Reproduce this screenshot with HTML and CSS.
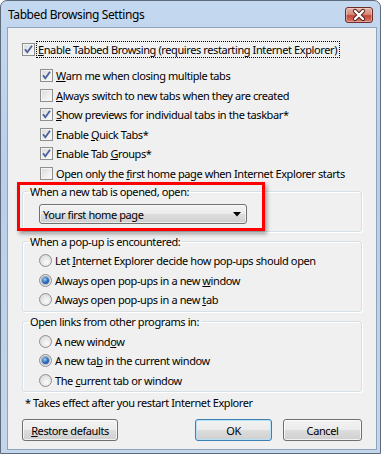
FILE: index.html
```html
<!DOCTYPE html>
<html>
<head>
<meta charset="utf-8">
<link rel="stylesheet" href="styles.css">
</head>
<body>
<div class="window">
  <div class="titlebar">
    <span class="title">Tabbed Browsing Settings</span>
    <div class="close">
      <svg width="28" height="16" viewBox="0 0 28 16">
        <path d="M10 4 L18 12 M18 4 L10 12" stroke="#4a1f1a" stroke-width="4.2" stroke-linecap="round"/>
        <path d="M10 4 L18 12 M18 4 L10 12" stroke="#ffffff" stroke-width="2.4" stroke-linecap="round"/>
      </svg>
    </div>
  </div>
  <div class="content">
    <div class="row main">
      <span class="cb"><svg width="11" height="11" viewBox="0 0 11 11"><path d="M2 5.2 L4.3 8.3 L9 1.8" fill="none" stroke="#4b5f9c" stroke-width="1.8"/></svg></span>
      <span class="focus"><u>E</u>nable Tabbed Browsing (requires restarting Internet Explorer)</span>
    </div>
    <div class="sublist">
      <div class="row"><span class="cb"><svg width="11" height="11" viewBox="0 0 11 11"><path d="M2 5.2 L4.3 8.3 L9 1.8" fill="none" stroke="#4b5f9c" stroke-width="1.8"/></svg></span><span class="lbl"><u>W</u>arn me when closing multiple tabs</span></div>
      <div class="row"><span class="cb"></span><span class="lbl"><u>A</u>lways switch to new tabs when they are created</span></div>
      <div class="row"><span class="cb"><svg width="11" height="11" viewBox="0 0 11 11"><path d="M2 5.2 L4.3 8.3 L9 1.8" fill="none" stroke="#4b5f9c" stroke-width="1.8"/></svg></span><span class="lbl"><u>S</u>how previews for individual tabs in the taskbar*</span></div>
      <div class="row"><span class="cb"><svg width="11" height="11" viewBox="0 0 11 11"><path d="M2 5.2 L4.3 8.3 L9 1.8" fill="none" stroke="#4b5f9c" stroke-width="1.8"/></svg></span><span class="lbl">Enable <u>Q</u>uick Tabs*</span></div>
      <div class="row"><span class="cb"><svg width="11" height="11" viewBox="0 0 11 11"><path d="M2 5.2 L4.3 8.3 L9 1.8" fill="none" stroke="#4b5f9c" stroke-width="1.8"/></svg></span><span class="lbl">Enable Tab <u>G</u>roups*</span></div>
      <div class="row"><span class="cb"></span><span class="lbl">Open only the <u>f</u>irst home page when Internet Explorer starts</span></div>
    </div>
    <fieldset class="group g1">
      <legend>When a new tab is opened, open:</legend>
      <div class="combo"><span>Your first home page</span><svg class="arrow" width="8" height="5" viewBox="0 0 8 5"><path d="M0 0 H8 L4 4.5 Z" fill="#000"/></svg></div>
    </fieldset>
    <fieldset class="group g2">
      <legend>When a pop-up is encountered:</legend>
      <div class="row"><span class="rb"></span><span class="lbl">Let <u>I</u>nternet Explorer decide how pop-ups should open</span></div>
      <div class="row"><span class="rb on"></span><span class="lbl">Always open pop-ups in a new <u>w</u>indow</span></div>
      <div class="row"><span class="rb"></span><span class="lbl">Always open pop-ups in a new <u>t</u>ab</span></div>
    </fieldset>
    <fieldset class="group g3">
      <legend>Open links from other programs in:</legend>
      <div class="row"><span class="rb"></span><span class="lbl">A new wind<u>o</u>w</span></div>
      <div class="row"><span class="rb on"></span><span class="lbl">A new ta<u>b</u> in the current window</span></div>
      <div class="row"><span class="rb"></span><span class="lbl">The <u>c</u>urrent tab or window</span></div>
    </fieldset>
    <p class="note">* Takes effect after you restart Internet Explorer</p>
    <div class="buttons">
      <div class="btn restore"><u>R</u>estore defaults</div>
      <div class="spacer"></div>
      <div class="btn ok">OK</div>
      <div class="btn cancel">Cancel</div>
    </div>
    <div class="highlight"></div>
  </div>
</div>
</body>
</html>
```
FILE: styles.css
```css
html, body {
  margin: 0;
  padding: 0;
  background: #ffffff;
}
body {
  font-family: "Noto Sans", "Open Sans", sans-serif;
  font-size: 11px;
  letter-spacing: -0.4px;
  color: #000;
}
.window {
  width: 381px;
  height: 454px;
  box-sizing: border-box;
  border: 1px solid #5d6b7d;
  border-radius: 7px 7px 0 0;
  background: linear-gradient(to bottom, #c4d8f0 0%, #b9cfe9 40%, #c3d6ec 100%);
  padding: 0 3px 3px 6px;
  display: flex;
  flex-direction: column;
}
.titlebar {
  height: 26px;
  flex: none;
  display: flex;
  align-items: flex-start;
  position: relative;
}
.title {
  font-size: 12px;
  letter-spacing: -0.4px;
  line-height: 16px;
  margin-top: 6px;
  margin-left: 1px;
  color: #000;
}
.close {
  position: absolute;
  right: 4px;
  top: 6px;
  width: 28px;
  height: 16px;
  box-sizing: border-box;
  border: 1px solid #6e2c26;
  border-radius: 3px;
  background: linear-gradient(to bottom, #e8b0a4 0%, #d88a7a 45%, #c2473a 55%, #d8786a 100%);
  box-shadow: inset 0 0 0 1px rgba(255,255,255,0.35);
  display: flex;
}
.close svg {
  margin: -1px;
}
.content {
  flex: 1;
  position: relative;
  background: #f0f0f0;
  border: 1px solid #8fa4be;
  padding: 13px 14px 0 14px;
  display: flex;
  flex-direction: column;
}
.row {
  display: flex;
  align-items: center;
  height: 19.5px;
  white-space: nowrap;
}
.row.main {
  height: 17px;
}
.cb {
  width: 13px;
  height: 13px;
  box-sizing: border-box;
  flex: none;
  border: 1px solid #8e8f8f;
  background: linear-gradient(135deg, #d9d9d9 0%, #ededed 55%, #fbfbfb 100%);
  box-shadow: inset 0 0 0 1px #f4f4f4;
  display: flex;
  align-items: center;
  justify-content: center;
}
.cb svg {
  display: block;
}
.focus {
  margin-left: 1px;
  padding: 0 2px 0 1px;
  border: 1px dotted #000;
  line-height: 15px;
}
.lbl {
  margin-left: 3px;
  line-height: 15px;
}
.sublist {
  margin-top: 8px;
  padding-left: 18px;
  display: flex;
  flex-direction: column;
}
.group {
  margin: 0;
  min-width: 0;
  border: 1px solid #d5dfe5;
  border-radius: 3px;
  box-shadow: inset 1px 1px 0 #ffffff, 1px 1px 0 #ffffff;
  padding: 0;
}
.group legend {
  padding: 0 2px;
  margin-left: 5px;
  line-height: 15px;
}
.group .row,
.group .combo {
  margin-left: 16px;
}
.g1 {
  margin-top: 1px;
  padding-bottom: 7px;
}
.g2 {
  margin-top: 2px;
  padding-top: 2px;
  padding-bottom: 1.5px;
}
.g3 {
  margin-top: 1.5px;
  padding-top: 2.75px;
  padding-bottom: 1.25px;
}
.rb {
  width: 13px;
  height: 13px;
  box-sizing: border-box;
  flex: none;
  border-radius: 50%;
  border: 1px solid #8f8f8f;
  background: radial-gradient(circle at 60% 65%, #fafafa 0%, #e6e6e6 50%, #cfcfcf 100%);
  display: flex;
  align-items: center;
  justify-content: center;
}
.rb.on::after {
  content: "";
  width: 7px;
  height: 7px;
  border-radius: 50%;
  background: radial-gradient(circle at 40% 35%, #9fd1f7 0%, #2f75c3 45%, #113c7a 100%);
  box-shadow: 0 0 0 1px rgba(40,70,110,0.35);
}
.combo {
  margin-top: 5px;
  width: 208px;
  height: 20px;
  box-sizing: border-box;
  border: 1px solid #707070;
  border-radius: 3px;
  background: linear-gradient(to bottom, #f3f3f3 0%, #ebebeb 50%, #dddddd 51%, #cfcfcf 100%);
  box-shadow: inset 0 0 0 1px rgba(255,255,255,0.6);
  display: flex;
  align-items: center;
  padding: 0 5px 0 3px;
  justify-content: space-between;
}
.combo span {
  line-height: 15px;
}
.arrow {
  display: block;
  margin-top: 1px;
}
.note {
  margin: 3px 0 0 3px;
  line-height: 15px;
}
.buttons {
  margin-top: 9px;
  display: flex;
  gap: 12px;
}
.spacer {
  flex: 1;
}
.btn {
  height: 22px;
  box-sizing: border-box;
  border: 1px solid #707070;
  border-radius: 3px;
  background: linear-gradient(to bottom, #f2f2f2 0%, #ebebeb 50%, #dddddd 51%, #cfcfcf 100%);
  box-shadow: inset 0 0 0 1px rgba(255,255,255,0.7);
  display: flex;
  align-items: center;
  justify-content: center;
  line-height: 15px;
}
.restore {
  width: 96px;
}
.ok {
  width: 77px;
  border-color: #3c7fb1;
  box-shadow: inset 0 0 0 1px #b7e1f7;
  margin-right: -1px;
}
.cancel {
  width: 79px;
}
.highlight {
  position: absolute;
  left: 9px;
  top: 154px;
  width: 248px;
  height: 49px;
  box-sizing: border-box;
  border: 3px solid #ff0000;
  box-shadow: 2px 3px 4px rgba(0,0,0,0.35);
}
```
